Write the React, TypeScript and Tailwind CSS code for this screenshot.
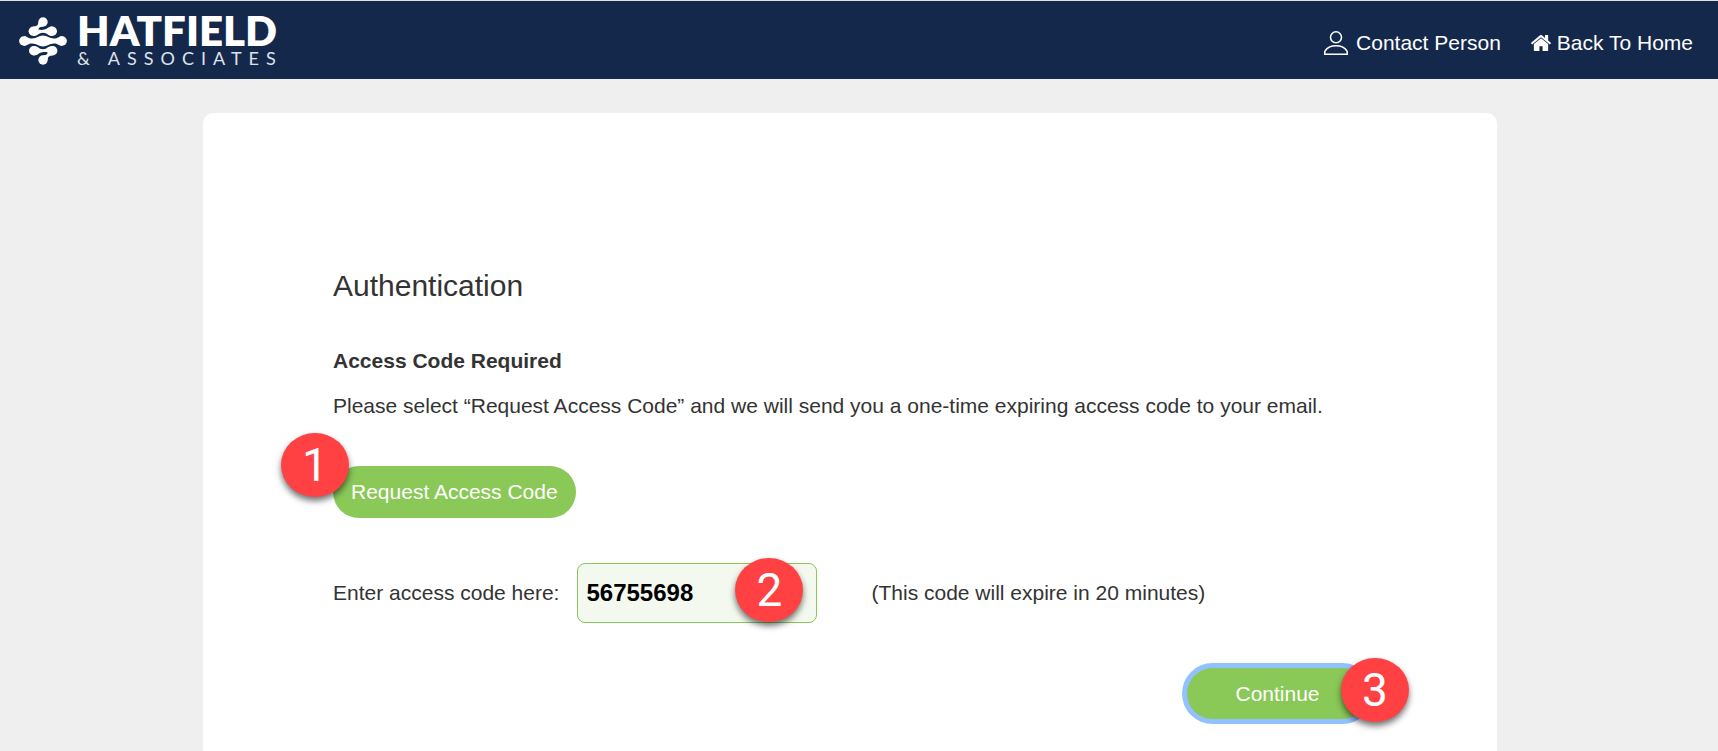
import clsx from "clsx";
import type { ReactNode } from "react";

function LogoHalf() {
  return (
    <>
      <circle cx="24" cy="5" r="4.7" />
      <circle cx="14.3" cy="14.3" r="4.7" />
      <circle cx="33.3" cy="14.3" r="4.7" />
      <circle cx="4.8" cy="24" r="4.7" />
      <path d="M19.300 5 C19.600 8.500 17 9.600 14.300 9.600 V14 H20 C18.500 11 20.500 9.900 24 9.700 Z" />
      <path d="M17 11.500 C20 13.600 25.500 13.200 28 11.500 C30 10 31 9.600 33.300 9.600 V19 C28.500 19 28.500 15.800 24 15.800 C19.500 15.800 19.500 19 14.300 19 V11.500 Z" />
      <path d="M4.800 19.300 C8.500 19.300 9 21.600 13 21.600 C18 21.600 19.500 18.600 24 18.600 C28.500 18.600 30 21.600 35 21.600 C39 21.600 39.500 19.300 43.200 19.300 V24.200 H4.800 Z" />
    </>
  );
}

function LogoMark() {
  return (
    <svg viewBox="0 0 48 48" className="size-12 shrink-0" fill="#fff" aria-hidden="true">
      <LogoHalf />
      <g transform="rotate(180 24 24)">
        <LogoHalf />
      </g>
    </svg>
  );
}

function Logo() {
  return (
    <a href="#" className="flex items-center gap-[10px] text-white font-[Lato,sans-serif]">
      <LogoMark />
      <span className="flex flex-col">
        <span className="text-[42px] leading-[34px] font-extrabold">HATFIELD</span>
        <span className="text-[18px] leading-[22px] tracking-[7px] text-[#dfe3ea]">&amp; ASSOCIATES</span>
      </span>
    </a>
  );
}

function PersonIcon() {
  return (
    <svg viewBox="0 0 24 24" className="size-6" fill="none" stroke="#fff" strokeWidth="1.5" aria-hidden="true">
      <circle cx="12" cy="6.300" r="5.500" />
      <path d="M.8 23.200 V20.300 C3 16.500 7 14.700 12 14.700 C17 14.700 21 16.500 23.200 20.300 V23.200 Z" />
    </svg>
  );
}

function HomeIcon() {
  return (
    <svg viewBox="90 90 1612 1612" className="size-5" fill="#fff" aria-hidden="true">
      <path d="M1472 992v480q0 26-19 45t-45 19h-384v-384h-256v384h-384q-26 0-45-19t-19-45v-480q0-1 .5-3t.5-3l575-474 575 474q1 2 1 6zm223-69l-62 74q-8 9-21 11h-3q-13 0-21-7l-692-577-692 577q-12 8-24 7-13-2-21-11l-62-74q-8-10-7-23.500t11-21.500l719-599q32-26 76-26t76 26l244 204v-195q0-14 9-23t23-9h192q14 0 23 9t9 23v408l219 182q10 8 11 21.500t-7 23.500z" />
    </svg>
  );
}

interface StepBadgeProps {
  className: string;
  children: ReactNode;
}

function StepBadge({ className, children }: StepBadgeProps) {
  return (
    <span
      className={clsx(
        "absolute flex h-16 w-[68px] items-center justify-center rounded-[50%] bg-[#ff4143] text-white",
        "text-[46px] leading-none font-[Roboto,sans-serif] shadow-[0_4px_6px_rgba(0,0,0,0.55)]",
        className
      )}
    >
      {children}
    </span>
  );
}

export default function App() {
  return (
    <div className="flex min-h-screen flex-col bg-[#efefef] text-[21px] leading-[30px] text-[#333] font-['Liberation_Sans',Arial,sans-serif]">
      <header className="flex flex-wrap items-center justify-between border-t border-[#dfe3df] bg-[#14284b] pt-3 pr-[25px] pb-[10px] pl-[19px]">
        <Logo />
        <nav className="flex items-center gap-[30px] pt-1 text-white">
          <a href="#" className="flex items-center gap-2">
            <PersonIcon />
            Contact Person
          </a>
          <a href="#" className="flex items-center gap-[6px]">
            <HomeIcon />
            Back To Home
          </a>
        </nav>
      </header>

      <main className="flex flex-1 justify-center pt-[34px] pr-[18px]">
        <section className="w-full max-w-[1294px] rounded-t-[10px] bg-white pt-[155px] pr-[129px] pb-7 pl-[130px]">
          <h1 className="text-[30px] leading-9">Authentication</h1>
          <h2 className="mt-[42px] font-bold">Access Code Required</h2>
          <p className="mt-[15px]">
            Please select “Request Access Code” and we will send you a one-time expiring access code to your email.
          </p>

          <div className="relative mt-[45px] w-fit">
            <button type="button" className="h-[52px] rounded-full bg-[#8ac858] px-[18px] text-white">
              Request Access Code
            </button>
            <StepBadge className="-top-[33px] -left-[52px]">1</StepBadge>
          </div>

          <form>
            <div className="mt-[45px] flex flex-wrap items-center">
              <label htmlFor="access-code" className="mr-[18px]">
                Enter access code here:
              </label>
              <div className="relative mr-[54px]">
                <input
                  id="access-code"
                  type="text"
                  defaultValue="56755698"
                  className="h-[60px] w-60 rounded-[8px] border border-[#8ac858] bg-[#f3f9ee] px-2 text-[24px] font-bold text-black"
                />
                <StepBadge className="-top-[5px] right-[14px]">2</StepBadge>
              </div>
              <span>(This code will expire in 20 minutes)</span>
            </div>

            <div className="relative mt-[45px] ml-auto w-fit">
              <button
                type="submit"
                className="h-[51px] w-[181px] rounded-full bg-[#8ac858] text-white ring-[5px] ring-[#91c2ff]"
              >
                Continue
              </button>
              <StepBadge className="-top-[10px] -right-[41px]">3</StepBadge>
            </div>
          </form>
        </section>
      </main>
    </div>
  );
}
